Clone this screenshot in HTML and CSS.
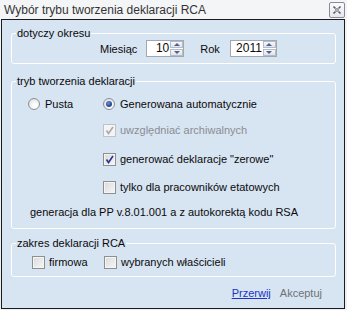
FILE: index.html
```html
<html>
<head>
<title>Wybór trybu tworzenia deklaracji RCA</title>
<link rel="stylesheet" href="styles.css">
</head>
<body>
<div class="window">
  <div class="titlebar">
    <span class="title">Wybór trybu tworzenia deklaracji RCA</span>
    <span class="close">
      <svg width="10" height="10" viewBox="0 0 10 10">
        <path d="M1.5 1.5 L8.5 8.5 M8.5 1.5 L1.5 8.5" stroke="#5a5a6a" stroke-width="1.6" fill="none" />
        <path d="M3 3 L7 7 M7 3 L3 7" stroke="#e8e8f0" stroke-width="0.6" fill="none" />
      </svg>
    </span>
  </div>
  <div class="panel">
    <fieldset class="group period">
      <legend>dotyczy okresu</legend>
      <div class="period-row">
        <span class="lbl-month">Miesiąc</span>
        <div class="spin spin-month">
          <span class="val">10</span>
          <span class="btns"><span class="btn up"></span><span class="btn down"></span></span>
        </div>
        <span class="lbl-year">Rok</span>
        <div class="spin spin-year">
          <span class="val">2011</span>
          <span class="btns"><span class="btn up"></span><span class="btn down"></span></span>
        </div>
      </div>
    </fieldset>

    <fieldset class="group mode">
      <legend>tryb tworzenia deklaracji</legend>
      <div class="row radios">
        <span class="opt opt-empty"><span class="radio"></span>Pusta</span>
        <span class="opt opt-auto"><span class="radio on"></span>Generowana automatycznie</span>
      </div>
      <div class="row sub first disabled">
        <span class="check on"><svg width="11" height="11" viewBox="0 0 11 11"><path d="M2.5 5.5 L4.5 8.5 L9 2" stroke="#a9a9a9" stroke-width="1.6" fill="none" /></svg></span>uwzględniać archiwalnych
      </div>
      <div class="row sub second">
        <span class="check on"><svg width="11" height="11" viewBox="0 0 11 11"><path d="M2.5 5.5 L4.5 8.5 L9 2" stroke="#24378c" stroke-width="1.6" fill="none" /></svg></span>generować deklaracje "zerowe"
      </div>
      <div class="row sub third">
        <span class="check"></span>tylko dla pracowników etatowych
      </div>
      <div class="row info">generacja dla PP v.8.01.001 a z autokorektą kodu RSA</div>
    </fieldset>

    <fieldset class="group scope">
      <legend>zakres deklaracji RCA</legend>
      <div class="row scope-row">
        <span class="opt opt-firm"><span class="check"></span>firmowa</span>
        <span class="opt opt-owners"><span class="check"></span>wybranych właścicieli</span>
      </div>
    </fieldset>

    <div class="actions">
      <a class="link" href="#">Przerwij</a>
      <span class="muted">Akceptuj</span>
    </div>
  </div>
</div>
</body>
</html>
```

FILE: styles.css
```css
body {
  margin: 0;
  background-color: #ffffff;
  font-family: "Liberation Sans", Arial, sans-serif;
  font-size: 11px;
  color: #0a0a0a;
}
.window {
  width: 347px;
  height: 310px;
  overflow: hidden;
  background: linear-gradient(#f4f5f7, #eceef1);
}
.titlebar {
  height: 19px;
  display: flex;
  align-items: center;
  justify-content: space-between;
  padding: 0 2px 0 4px;
}
.title {
  font-size: 12px;
  color: #333333;
}
.close {
  width: 14px;
  height: 14px;
  margin-top: 1px;
  border: 1px solid #8a8a9a;
  border-radius: 2px;
  background: linear-gradient(#fbfbfd, #e6e7ec);
  display: flex;
  align-items: center;
  justify-content: center;
}
.panel {
  box-sizing: border-box;
  width: 344px;
  height: 290px;
  margin-left: 1px;
  border: 1px solid #1b1b1b;
  background-color: #d7e4f2;
  padding: 6px 8px 0 9px;
}
.group {
  margin: 0;
  padding: 0;
  border: 1px solid #ffffff;
  border-radius: 3px;
  min-width: 0;
}
.group legend {
  margin-left: 4px;
  padding: 0 1px;
  line-height: 14px;
}
.period-row {
  display: flex;
  align-items: center;
  height: 17px;
  padding: 0 0 6px 88px;
}
.lbl-month {
  margin-right: 9px;
}
.lbl-year {
  margin: 0 10px 0 16px;
}
.spin {
  box-sizing: border-box;
  height: 17px;
  display: flex;
  border: 1px solid #a3a7ae;
  background: #ffffff;
}
.spin-month {
  width: 38px;
}
.spin-year {
  width: 47px;
}
.spin .val {
  flex: 1;
  text-align: right;
  line-height: 15px;
  font-size: 12px;
  padding-right: 1px;
}
.btns {
  width: 13px;
  display: flex;
  flex-direction: column;
  gap: 1px;
  background: #ffffff;
}
.btn {
  flex: 1;
  box-sizing: border-box;
  border: 1px solid #b5bcc7;
  background: linear-gradient(#f6f7f9, #dfe3e9);
  display: flex;
  align-items: center;
  justify-content: center;
}
.btn.up::after {
  content: "";
  border-left: 3px solid transparent;
  border-right: 3px solid transparent;
  border-bottom: 3px solid #4b6392;
}
.btn.down::after {
  content: "";
  border-left: 3px solid transparent;
  border-right: 3px solid transparent;
  border-top: 3px solid #4b6392;
}
.mode {
  margin-top: 10px;
}
.row {
  display: flex;
  align-items: center;
  height: 16px;
}
.radios {
  margin-top: 8px;
  padding-left: 16px;
}
.opt {
  display: flex;
  align-items: center;
}
.opt-empty {
  width: 75px;
}
.radio {
  box-sizing: border-box;
  width: 12px;
  height: 12px;
  margin-right: 5px;
  border-radius: 50%;
  border: 1px solid #8c8f94;
  background: radial-gradient(circle at 60% 65%, #ffffff 20%, #e2e4e8 70%, #cfd2d6);
  display: flex;
  align-items: center;
  justify-content: center;
}
.radio.on::after {
  content: "";
  width: 6px;
  height: 6px;
  border-radius: 50%;
  background: radial-gradient(circle at 40% 35%, #6f8ed0, #1c3f8a 70%, #15306a);
}
.check {
  box-sizing: border-box;
  width: 13px;
  height: 13px;
  margin-right: 4px;
  border: 1px solid #8e8f91;
  background: linear-gradient(135deg, #d9dadc, #f7f7f7);
  box-shadow: inset 0 0 0 1px #f4f4f4;
  display: flex;
  align-items: center;
  justify-content: center;
}
.check svg {
  display: block;
}
.disabled {
  color: #8a8d92;
}
.disabled .check {
  border-color: #bfc2c6;
  background: #f4f4f4;
}
.sub {
  padding-left: 91px;
}
.sub.first {
  margin-top: 10px;
}
.sub.second {
  margin-top: 13px;
}
.sub.third {
  margin-top: 12px;
}
.info {
  margin-top: 9px;
  padding-left: 18px;
  margin-bottom: 8px;
}
.scope {
  margin-top: 7px;
}
.scope-row {
  margin-top: 4px;
  margin-bottom: 6px;
  padding-left: 20px;
}
.opt-firm {
  width: 72px;
}
.actions {
  display: flex;
  justify-content: flex-end;
  align-items: center;
  gap: 9px;
  height: 16px;
  margin-top: 8px;
  padding-right: 14px;
}
.link {
  color: #1b33c9;
  text-decoration: underline;
}
.muted {
  color: #6e7276;
}
```
